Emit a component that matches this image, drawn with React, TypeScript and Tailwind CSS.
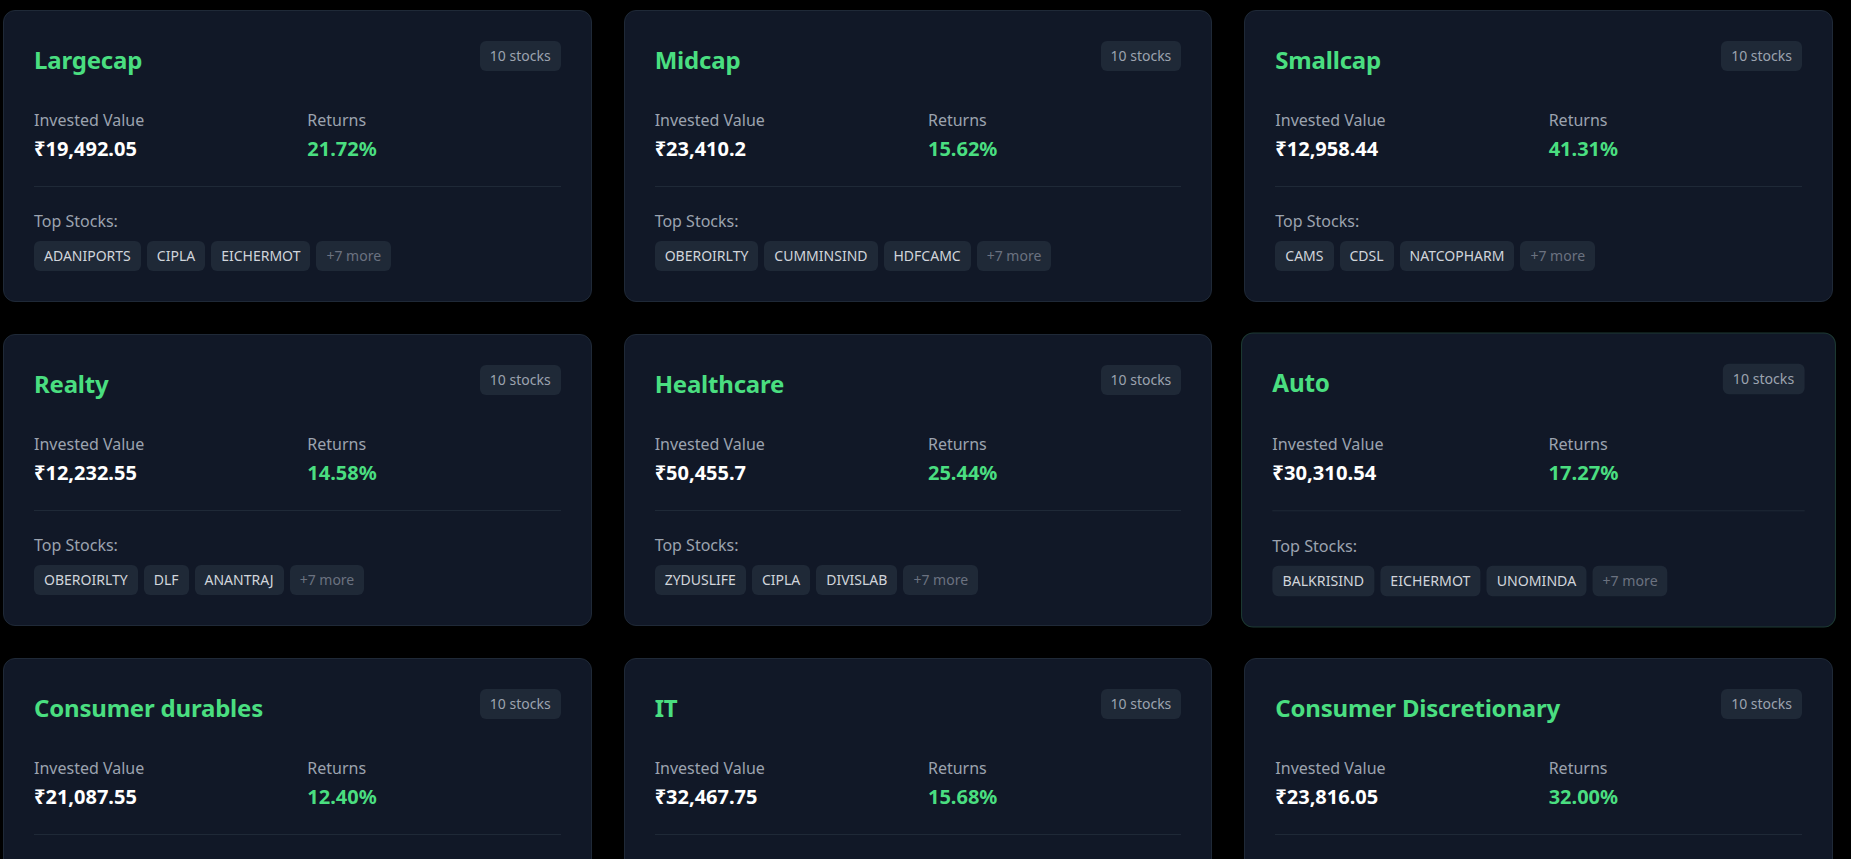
import { clsx } from 'clsx';

interface Sector {
  name: string;
  invested: string;
  returns: string;
  stocks: string[];
  active?: boolean;
}

const sectors: Sector[] = [
  { name: 'Largecap', invested: '₹19,492.05', returns: '21.72%', stocks: ['ADANIPORTS', 'CIPLA', 'EICHERMOT'] },
  { name: 'Midcap', invested: '₹23,410.2', returns: '15.62%', stocks: ['OBEROIRLTY', 'CUMMINSIND', 'HDFCAMC'] },
  { name: 'Smallcap', invested: '₹12,958.44', returns: '41.31%', stocks: ['CAMS', 'CDSL', 'NATCOPHARM'] },
  { name: 'Realty', invested: '₹12,232.55', returns: '14.58%', stocks: ['OBEROIRLTY', 'DLF', 'ANANTRAJ'] },
  { name: 'Healthcare', invested: '₹50,455.7', returns: '25.44%', stocks: ['ZYDUSLIFE', 'CIPLA', 'DIVISLAB'] },
  { name: 'Auto', invested: '₹30,310.54', returns: '17.27%', stocks: ['BALKRISIND', 'EICHERMOT', 'UNOMINDA'], active: true },
  { name: 'Consumer durables', invested: '₹21,087.55', returns: '12.40%', stocks: ['DIXON', 'VOLTAS', 'BLUESTARCO'] },
  { name: 'IT', invested: '₹32,467.75', returns: '15.68%', stocks: ['PERSISTENT', 'COFORGE', 'KPITTECH'] },
  { name: 'Consumer Discretionary', invested: '₹23,816.05', returns: '32.00%', stocks: ['TRENT', 'INDHOTEL', 'TITAN'] },
];

function SectorCard({ sector }: { sector: Sector }) {
  return (
    <div
      className={clsx(
        'rounded-xl border bg-[#111827] p-[30px] transition-transform',
        sector.active ? 'scale-[1.01] border-[#1e3b34]' : 'border-[#1f2937]'
      )}
    >
      {/* Header */}
      <div className="flex items-start justify-between">
        <h2 className="mt-[3px] text-2xl leading-8 font-bold tracking-[-0.2px] text-[#4ade80]">{sector.name}</h2>
        <span className="rounded-md bg-[#1f2937] px-[10px] py-[5px] text-sm leading-5 text-[#9ca3af]">10 stocks</span>
      </div>

      {/* Stats */}
      <div className="mt-[32px] grid grid-cols-2 gap-x-5">
        <div>
          <p className="text-base leading-6 text-[#9ca3af]">Invested Value</p>
          <p className="mt-[3px] text-xl leading-7 font-bold text-white">{sector.invested}</p>
        </div>
        <div>
          <p className="text-base leading-6 text-[#9ca3af]">Returns</p>
          <p className="mt-[3px] text-xl leading-7 font-bold text-[#4ade80]">{sector.returns}</p>
        </div>
      </div>

      {/* Top stocks */}
      <div className="mt-[23px] border-t border-[#1f2937] pt-[22px]">
        <p className="text-base leading-6 text-[#9ca3af]">Top Stocks:</p>
        <div className="mt-2 flex flex-wrap gap-1.5">
          {sector.stocks.map((s) => (
            <span key={s} className="rounded-md bg-[#1f2937] px-2.5 py-[5px] text-sm leading-5 text-[#d1d5db]">
              {s}
            </span>
          ))}
          <span className="rounded-md bg-[#1f2937] px-2.5 py-[5px] text-sm leading-5 text-[#6b7280]">+7 more</span>
        </div>
      </div>
    </div>
  );
}

export default function App() {
  return (
    <div className="h-[859px] overflow-hidden bg-black pt-[10px] pl-[3px] font-['Noto_Sans',sans-serif]">
      <div className="grid w-[1830px] grid-cols-3 gap-8">
        {sectors.map((s) => (
          <SectorCard key={s.name} sector={s} />
        ))}
      </div>
    </div>
  );
}
